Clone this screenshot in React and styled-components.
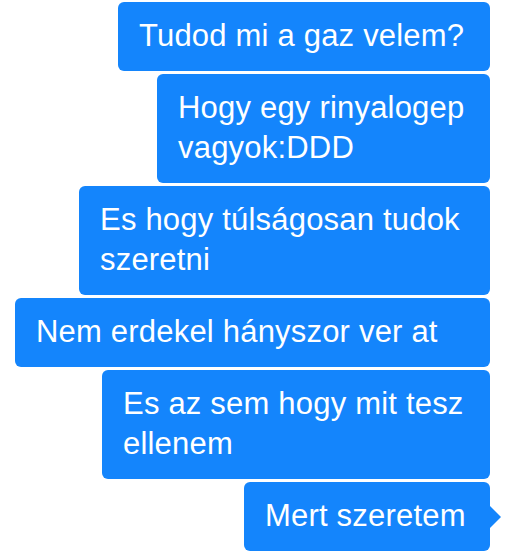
import React from "react";
import styled, { createGlobalStyle, css } from "styled-components";

const GlobalStyle = createGlobalStyle`
  html, body {
    margin: 0;
    padding: 0;
    background: #ffffff;
  }
  body {
    font-family: "Liberation Sans", Arial, sans-serif;
  }
`;

const BUBBLE_BLUE = "#1485fc";

const Thread = styled.div`
  width: 513px;
  height: 558px;
  box-sizing: border-box;
  padding: 2px 23px 0 0;
  display: flex;
  flex-direction: column;
  align-items: flex-end;
  gap: 3px;
  overflow: hidden;
`;

const Bubble = styled.div`
  position: relative;
  box-sizing: border-box;
  width: ${(p) => p.$width}px;
  padding: 14px 16px 15px 21px;
  background: ${BUBBLE_BLUE};
  border-radius: 6px;
  color: #ffffff;
  font-size: 31px;
  line-height: 40px;
  letter-spacing: 0.2px;

  ${(p) =>
    p.$tail &&
    css`
      &::after {
        content: "";
        position: absolute;
        right: -11px;
        top: 50%;
        transform: translateY(-50%);
        border-left: 11px solid ${BUBBLE_BLUE};
        border-top: 11px solid transparent;
        border-bottom: 11px solid transparent;
      }
    `}
`;

const Line = styled.span`
  display: block;
  white-space: nowrap;
`;

const messages = [
  { width: 372, lines: ["Tudod mi a gaz velem?"] },
  { width: 333, lines: ["Hogy egy rinyalogep", "vagyok:DDD"] },
  { width: 411, lines: ["Es hogy túlságosan tudok", "szeretni"] },
  { width: 475, lines: ["Nem erdekel hányszor ver at"] },
  { width: 388, lines: ["Es az sem hogy mit tesz", "ellenem"] },
  { width: 246, lines: ["Mert szeretem"], tail: true },
];

export default function App() {
  return (
    <>
      <GlobalStyle />
      <Thread>
        {messages.map((m, i) => (
          <Bubble key={i} $width={m.width} $tail={m.tail}>
            {m.lines.map((l, j) => (
              <Line key={j}>{l}</Line>
            ))}
          </Bubble>
        ))}
      </Thread>
    </>
  );
}
